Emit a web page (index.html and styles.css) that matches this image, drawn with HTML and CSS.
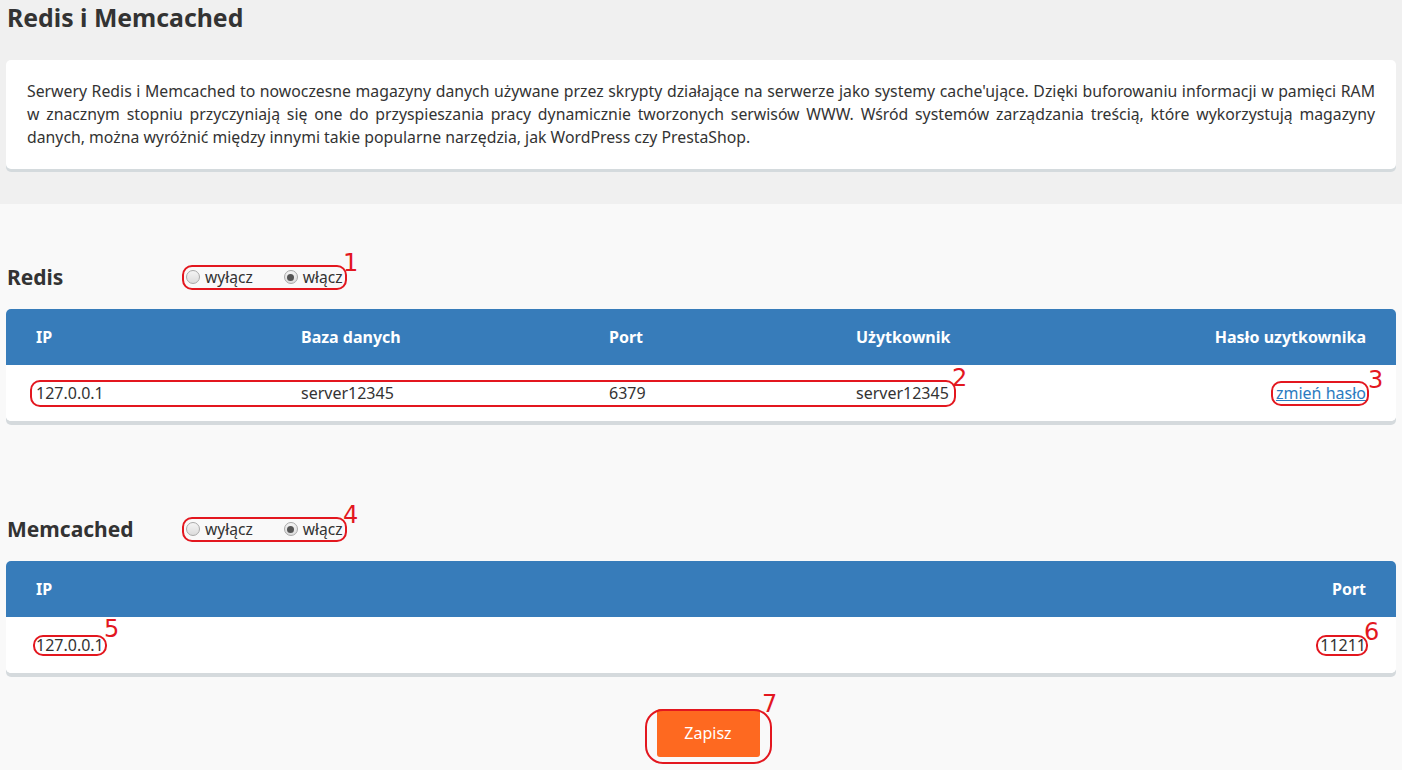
FILE: index.html
```html
<!DOCTYPE html>
<html lang="pl">
<head>
<meta charset="utf-8">
<title>Redis i Memcached</title>
<link rel="stylesheet" href="styles.css">
</head>
<body>
<div class="page">
  <header class="top">
    <h1 class="title">Redis i Memcached</h1>
    <div class="card">
      <p>Serwery Redis i Memcached to nowoczesne magazyny danych używane przez skrypty działające na serwerze jako systemy cache'ujące. Dzięki buforowaniu informacji w pamięci RAM w znacznym stopniu przyczyniają się one do przyspieszania pracy dynamicznie tworzonych serwisów WWW. Wśród systemów zarządzania treścią, które wykorzystują magazyny danych, można wyróżnić między innymi takie popularne narzędzia, jak WordPress czy PrestaShop.</p>
    </div>
  </header>

  <main class="main">
    <section class="block">
      <div class="block-head">
        <h2 class="block-title">Redis</h2>
        <div class="radios">
          <label class="radio"><span class="dot"></span>wyłącz</label>
          <label class="radio"><span class="dot on"></span>włącz</label>
        </div>
      </div>
      <div class="tbl">
        <div class="row head cols-redis">
          <div>IP</div><div>Baza danych</div><div>Port</div><div>Użytkownik</div><div class="right">Hasło uzytkownika</div>
        </div>
        <div class="row body cols-redis">
          <div>127.0.0.1</div><div>server12345</div><div>6379</div><div>server12345</div><div class="right"><a href="#" class="link">zmień hasło</a></div>
        </div>
      </div>
    </section>

    <section class="block second">
      <div class="block-head">
        <h2 class="block-title">Memcached</h2>
        <div class="radios">
          <label class="radio"><span class="dot"></span>wyłącz</label>
          <label class="radio"><span class="dot on"></span>włącz</label>
        </div>
      </div>
      <div class="tbl">
        <div class="row head cols-mem">
          <div>IP</div><div class="right">Port</div>
        </div>
        <div class="row body cols-mem">
          <div>127.0.0.1</div><div class="right">11211</div>
        </div>
      </div>
    </section>

    <div class="actions">
      <button class="btn" type="button">Zapisz</button>
    </div>
  </main>

  <div class="notes" aria-hidden="true">
    <span class="box b1"></span><span class="num n1">1</span>
    <span class="box b2"></span><span class="num n2">2</span>
    <span class="box b3"></span><span class="num n3">3</span>
    <span class="box b4"></span><span class="num n4">4</span>
    <span class="box b5"></span><span class="num n5">5</span>
    <span class="box b6"></span><span class="num n6">6</span>
    <span class="box b7"></span><span class="num n7">7</span>
  </div>
</div>
</body>
</html>
```

FILE: styles.css
```css
* { box-sizing: border-box; }

html, body {
  margin: 0;
  padding: 0;
  background: #f9f9f9;
}

body {
  font-family: "Noto Sans", "Open Sans", sans-serif;
  color: #333333;
  font-size: 16px;
}

.page {
  position: relative;
  width: 1402px;
  height: 770px;
  overflow: hidden;
}

.top {
  background: #f0f0f0;
  padding: 0 6px 35px 6px;
}

.title {
  margin: 0;
  padding-left: 1px;
  font-size: 24.8px;
  font-weight: 700;
  line-height: 34px;
  color: #333333;
  margin-bottom: 26px;
}

.card {
  background: #ffffff;
  border-radius: 5px;
  box-shadow: 0 3px 0 #d4dadd;
  padding: 20px 21px 20px 21px;
}

.card p {
  margin: 0;
  line-height: 23px;
  text-align: justify;
  font-size: 15.8px;
  color: #333333;
}

.main {
  background: #f9f9f9;
  padding: 58px 6px 0 6px;
}

.block-head {
  display: flex;
  align-items: center;
  height: 30px;
  margin-bottom: 17px;
}

.block-title {
  margin: 0;
  width: 180px;
  padding-left: 1px;
  font-size: 21px;
  font-weight: 700;
  color: #333333;
}

.radios {
  display: flex;
  align-items: center;
  gap: 31px;
}

.radio {
  display: flex;
  align-items: center;
  gap: 5px;
  font-size: 15.6px;
  line-height: 20px;
  color: #333333;
}

.dot {
  width: 14px;
  height: 14px;
  border-radius: 50%;
  border: 1px solid #a9a9a9;
  background: linear-gradient(#f4f4f4, #dcdcdc);
  display: flex;
  align-items: center;
  justify-content: center;
}

.dot.on::after {
  content: "";
  width: 7px;
  height: 7px;
  border-radius: 50%;
  background: #555555;
}

.tbl {
  border-radius: 5px;
  overflow: hidden;
  background: #ffffff;
  box-shadow: 0 4px 0 #d5dadd;
}

.row {
  display: grid;
  align-items: center;
  height: 56px;
  padding: 0 30px;
}

.row.head {
  background: #377cba;
  color: #ffffff;
  font-weight: 700;
  font-size: 16px;
}

.row.body {
  background: #ffffff;
  color: #333333;
  font-size: 16px;
}

.cols-redis {
  grid-template-columns: 265px 308px 247px 300px 1fr;
}

.cols-mem {
  grid-template-columns: 1fr 1fr;
}

.right {
  text-align: right;
}

.link {
  color: #2b7bbf;
  text-decoration: underline;
}

.block.second {
  margin-top: 93px;
}

.actions {
  display: flex;
  justify-content: center;
  padding-top: 36px;
}

.btn {
  width: 103px;
  height: 48px;
  border: 0;
  border-radius: 3px;
  background: #fe6920;
  color: #ffffff;
  font-family: "Noto Sans", "Open Sans", sans-serif;
  font-size: 16px;
  padding: 0;
  margin-left: 14px;
}

/* annotation overlay */
.notes {
  position: absolute;
  inset: 0;
  pointer-events: none;
}

.box {
  position: absolute;
  border: 2px solid #e3171f;
  border-radius: 10px;
}

.num {
  position: absolute;
  font-family: "DejaVu Sans", sans-serif;
  font-size: 24px;
  line-height: 24px;
  color: #e3171f;
}

.b1 { left: 182px; top: 265px; width: 165px; height: 25px; }
.b2 { left: 30px; top: 380px; width: 926px; height: 27px; }
.b3 { left: 1271px; top: 381px; width: 98px; height: 25px; }
.b4 { left: 182px; top: 517px; width: 165px; height: 25px; }
.b5 { left: 33px; top: 635px; width: 74px; height: 21px; }
.b6 { left: 1316px; top: 635px; width: 52px; height: 21px; }
.b7 { left: 645px; top: 709px; width: 127px; height: 55px; border-radius: 18px; }

.n1 { left: 343px; top: 251px; }
.n2 { left: 952px; top: 366px; }
.n3 { left: 1368px; top: 368px; }
.n4 { left: 343px; top: 503px; }
.n5 { left: 104px; top: 617px; }
.n6 { left: 1364px; top: 620px; }
.n7 { left: 762px; top: 692px; }
```
